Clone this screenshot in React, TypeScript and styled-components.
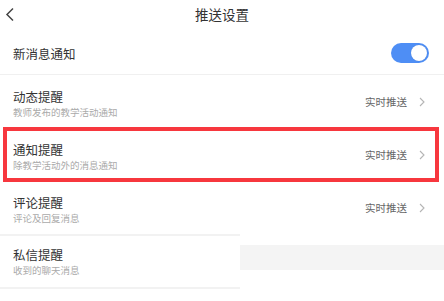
import React from "react";
import styled, { createGlobalStyle } from "styled-components";

const GlobalStyle = createGlobalStyle`
  html, body {
    margin: 0;
    padding: 0;
    background: #ffffff;
  }
  body {
    font-family: "Noto Sans CJK SC", "Noto Sans", sans-serif;
    color: #333333;
  }
`;

const Page = styled.div`
  width: 444px;
  height: 301px;
  overflow: hidden;
  background: #ffffff;
`;

const Header = styled.div`
  display: grid;
  grid-template-columns: 40px 1fr 40px;
  align-items: center;
  height: 28px;
  padding-bottom: 4px;
`;

const BackButton = styled.div`
  display: flex;
  align-items: center;
  padding-left: 5px;
  height: 100%;
`;

const Title = styled.div`
  text-align: center;
  font-size: 13.5px;
  color: #333333;
  line-height: 28px;
`;

const SwitchRow = styled.div`
  display: flex;
  align-items: center;
  justify-content: space-between;
  height: 42px;
  padding: 0 15px 0 13px;
  border-bottom: 1px solid #f0f0f0;
`;

const SwitchLabel = styled.div`
  font-size: 12.5px;
  color: #333333;
`;

const Toggle = styled.div<{ $on: boolean }>`
  position: relative;
  width: 38px;
  height: 20px;
  border-radius: 10px;
  background: ${(p) => (p.$on ? "#4e8ef5" : "#dddddd")};
`;

const Knob = styled.div<{ $on: boolean }>`
  position: absolute;
  top: 2px;
  ${(p) => (p.$on ? "right: 2px;" : "left: 2px;")}
  width: 16px;
  height: 16px;
  border-radius: 50%;
  background: #ffffff;
  box-shadow: 0 0 1px rgba(0, 0, 0, 0.2);
`;

const Row = styled.div<{ $height: number; $top: number }>`
  position: relative;
  display: flex;
  align-items: center;
  justify-content: space-between;
  height: ${(p) => p.$height}px;
  padding: 0 19px 0 13px;
  box-sizing: border-box;
`;

const RowText = styled.div<{ $top: number }>`
  display: flex;
  flex-direction: column;
  align-self: flex-start;
  padding-top: ${(p) => p.$top}px;
`;

const RowTitle = styled.div`
  font-size: 12.5px;
  line-height: 16px;
  color: #333333;
`;

const RowSub = styled.div`
  font-size: 9.5px;
  line-height: 13px;
  margin-top: 1px;
  color: #aaaaaa;
`;

const RowRight = styled.div`
  display: flex;
  align-items: center;
  gap: 12px;
  font-size: 10.5px;
  color: #666666;
`;

const Highlight = styled.div`
  position: absolute;
  left: 3px;
  right: 5px;
  top: -1px;
  bottom: -1px;
  border: 4px solid #f7373e;
  pointer-events: none;
`;

const Lower = styled.div`
  display: flex;
`;

const LeftColumn = styled.div`
  width: 240px;
`;

const RightColumn = styled.div`
  flex: 1;
  padding-top: 11px;
`;

const Divider = styled.div`
  height: 2px;
  background: #f2f2f2;
`;

const GreyBand = styled.div`
  height: 25px;
  background: #f4f4f4;
`;

const Chevron = () => (
  <svg width="6" height="10" viewBox="0 0 6 10">
    <polyline
      points="1,1 5,5 1,9"
      fill="none"
      stroke="#b5b5b5"
      strokeWidth="1.1"
    />
  </svg>
);

const BackIcon = () => (
  <svg width="10" height="15" viewBox="0 0 10 15">
    <polyline
      points="8,1.5 2,7.5 8,13.5"
      fill="none"
      stroke="#444444"
      strokeWidth="1.5"
    />
  </svg>
);

type Item = {
  title: string;
  sub: string;
  value?: string;
  highlight?: boolean;
};

const items: Item[] = [
  { title: "动态提醒", sub: "教师发布的教学活动通知", value: "实时推送" },
  {
    title: "通知提醒",
    sub: "除教学活动外的消息通知",
    value: "实时推送",
    highlight: true,
  },
  { title: "评论提醒", sub: "评论及回复消息", value: "实时推送" },
];

export default function App() {
  return (
    <Page>
      <GlobalStyle />
      <Header>
        <BackButton>
          <BackIcon />
        </BackButton>
        <Title>推送设置</Title>
        <div />
      </Header>
      <SwitchRow>
        <SwitchLabel>新消息通知</SwitchLabel>
        <Toggle $on>
          <Knob $on />
        </Toggle>
      </SwitchRow>
      {items.map((item) => (
        <Row key={item.title} $height={53} $top={14}>
          <RowText $top={14}>
            <RowTitle>{item.title}</RowTitle>
            <RowSub>{item.sub}</RowSub>
          </RowText>
          {item.value && (
            <RowRight>
              {item.value}
              <Chevron />
            </RowRight>
          )}
          {item.highlight && <Highlight />}
        </Row>
      ))}
      <Lower>
        <LeftColumn>
          <Divider />
          <Row $height={51} $top={11}>
            <RowText $top={11}>
              <RowTitle>私信提醒</RowTitle>
              <RowSub>收到的聊天消息</RowSub>
            </RowText>
          </Row>
          <Divider />
        </LeftColumn>
        <RightColumn>
          <GreyBand />
        </RightColumn>
      </Lower>
    </Page>
  );
}
